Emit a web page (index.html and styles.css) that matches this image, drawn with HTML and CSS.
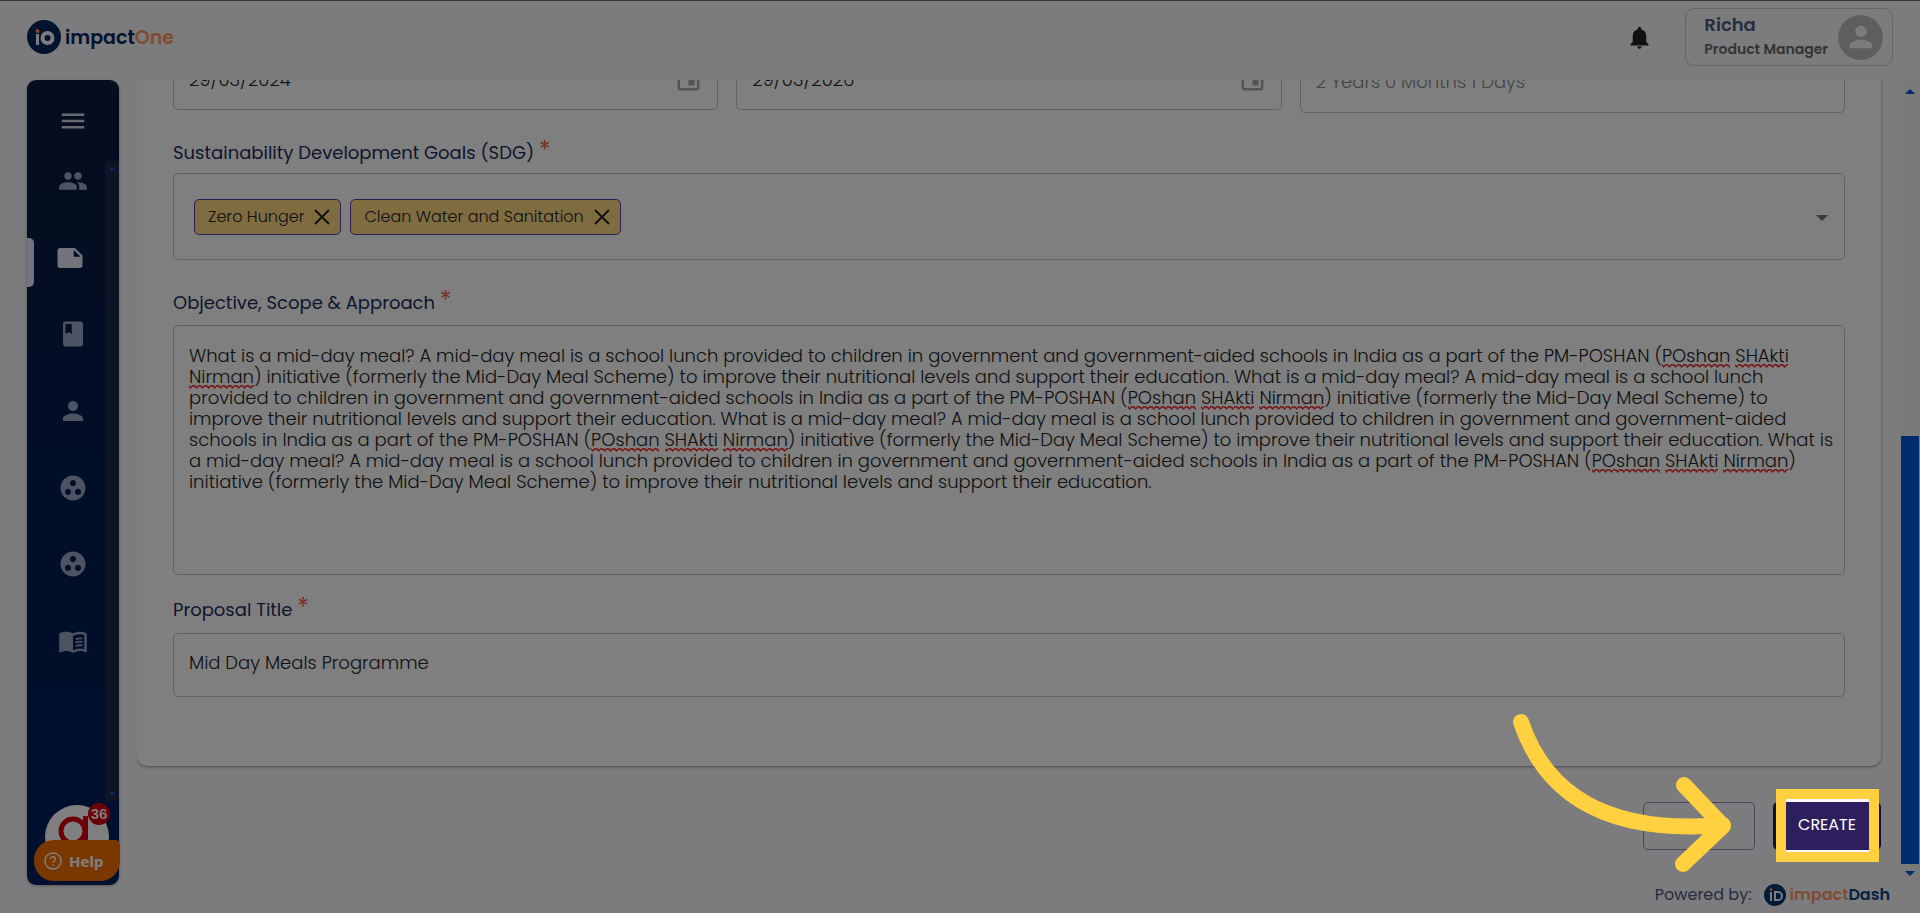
FILE: index.html
```html
<!DOCTYPE html>
<html lang="en">
<head>
  <meta charset="UTF-8">
  <title>impactOne</title>
  <link rel="stylesheet" href="styles.css">
</head>
<body>

  <header class="topbar">
    <a class="brand" href="#">
      <svg class="brand-mark" viewBox="0 0 34 34" width="34" height="34" aria-hidden="true">
        <circle cx="17" cy="17" r="17" fill="#04285a"/>
        <rect x="9" y="14" width="3" height="11" fill="#f8f8fc"/>
        <circle cx="10.500" cy="11" r="2" fill="#ff8a4c"/>
        <circle cx="20.500" cy="18" r="5" fill="none" stroke="#f8f8fc" stroke-width="4"/>
      </svg>
      <span class="brand-name">impact<span class="brand-accent">One</span></span>
    </a>
    <div class="topbar-right">
      <button class="icon-btn" aria-label="Notifications">
        <svg viewBox="0 0 24 24" width="27" height="27"><path d="M12 22c1.1 0 2-.9 2-2h-4c0 1.100.89 2 2 2zm6-6v-5c0-3.070-1.640-5.640-4.500-6.320V4c0-.83-.67-1.500-1.500-1.500s-1.500.67-1.500 1.500v.68C7.630 5.360 6 7.920 6 11v5l-2 2v1h16v-1l-2-2z"/></svg>
      </button>
      <button class="user">
        <span class="user-text">
          <span class="user-name">Richa</span>
          <span class="user-role">Product Manager</span>
        </span>
        <span class="avatar">
          <svg viewBox="0 0 24 24" width="34" height="34"><path d="M12 12c2.210 0 4-1.790 4-4s-1.790-4-4-4-4 1.790-4 4 1.790 4 4 4zm0 2c-2.670 0-8 1.340-8 4v2h16v-2c0-2.660-5.330-4-8-4z"/></svg>
        </span>
      </button>
    </div>
  </header>

  <div class="shell">
    <nav class="sidebar">
      <button class="menu-btn" aria-label="Menu">
        <svg viewBox="0 0 24 24" width="30" height="30"><path d="M3 18h18v-2H3v2zm0-5h18v-2H3v2zm0-7v2h18V6H3z"/></svg>
      </button>
      <div class="nav-scroll">
        <ul class="nav-list">
          <li><a href="#" aria-label="Team"><svg viewBox="0 0 24 24"><path d="M16 11c1.660 0 2.990-1.340 2.990-3S17.660 5 16 5c-1.660 0-3 1.340-3 3s1.340 3 3 3zm-8 0c1.660 0 2.990-1.340 2.990-3S9.660 5 8 5C6.340 5 5 6.340 5 8s1.340 3 3 3zm0 2c-2.330 0-7 1.170-7 3.500V19h14v-2.500c0-2.330-4.670-3.500-7-3.500zm8 0c-.29 0-.62.02-.97.05 1.160.84 1.970 1.970 1.970 3.450V19h6v-2.500c0-2.330-4.670-3.500-7-3.500z"/></svg></a></li>
          <li class="active"><a href="#" aria-label="Proposals"><svg viewBox="0 0 24 24"><path d="M22 10l-6-6H4c-1.100 0-2 .9-2 2v12.010c0 1.100.9 1.990 2 1.990l16-.01c1.100 0 2-.89 2-1.990v-8zm-7-4.500l5.500 5.500H15V5.500z"/></svg></a></li>
          <li><a href="#" aria-label="Projects"><svg viewBox="0 0 24 24"><path d="M18 2H6c-1.100 0-2 .9-2 2v16c0 1.100.9 2 2 2h12c1.100 0 2-.9 2-2V4c0-1.100-.9-2-2-2zM6 4h5v8l-2.500-1.500L6 12V4z"/></svg></a></li>
          <li><a href="#" aria-label="Profile"><svg viewBox="0 0 24 24"><path d="M12 12c2.210 0 4-1.790 4-4s-1.790-4-4-4-4 1.790-4 4 1.790 4 4 4zm0 2c-2.670 0-8 1.340-8 4v2h16v-2c0-2.660-5.330-4-8-4z"/></svg></a></li>
          <li><a href="#" aria-label="Groups"><svg viewBox="0 0 24 24"><path d="M12 2C6.480 2 2 6.480 2 12s4.480 10 10 10 10-4.480 10-10S17.520 2 12 2zM8 17.500c-1.380 0-2.500-1.120-2.500-2.500s1.120-2.500 2.500-2.500 2.500 1.120 2.500 2.500-1.120 2.500-2.500 2.500zM9.500 8c0-1.380 1.120-2.500 2.500-2.500s2.500 1.120 2.500 2.500-1.120 2.500-2.500 2.500S9.500 9.380 9.500 8zm6.500 9.500c-1.380 0-2.500-1.120-2.500-2.500s1.120-2.500 2.500-2.500 2.500 1.120 2.500 2.500-1.120 2.500-2.500 2.500z"/></svg></a></li>
          <li><a href="#" aria-label="Partners"><svg viewBox="0 0 24 24"><path d="M12 2C6.480 2 2 6.480 2 12s4.480 10 10 10 10-4.480 10-10S17.520 2 12 2zM8 17.500c-1.380 0-2.500-1.120-2.500-2.500s1.120-2.500 2.500-2.500 2.500 1.120 2.500 2.500-1.120 2.500-2.500 2.500zM9.500 8c0-1.380 1.120-2.500 2.500-2.500s2.500 1.120 2.500 2.500-1.120 2.500-2.500 2.500S9.500 9.380 9.500 8zm6.500 9.500c-1.380 0-2.500-1.120-2.500-2.500s1.120-2.500 2.500-2.500 2.500 1.120 2.500 2.500-1.120 2.500-2.500 2.500z"/></svg></a></li>
          <li><a href="#" aria-label="Library"><svg viewBox="0 0 24 24"><path d="M21 5c-1.110-.35-2.330-.5-3.500-.5-1.950 0-4.050.4-5.500 1.500-1.450-1.100-3.550-1.500-5.500-1.500S2.450 4.900 1 6v14.650c0 .25.25.5.5.5.1 0 .15-.05.25-.05C3.100 20.450 5.050 20 6.500 20c1.950 0 4.050.4 5.500 1.500 1.350-.85 3.800-1.500 5.500-1.500 1.650 0 3.350.3 4.750 1.050.1.05.15.05.25.05.25 0 .5-.25.5-.5V6c-.6-.45-1.250-.75-2-1zm0 13.500c-1.100-.35-2.300-.5-3.500-.5-1.700 0-4.150.65-5.500 1.500V8c1.350-.85 3.800-1.500 5.500-1.500 1.200 0 2.400.15 3.500.5v11.500z"/><path d="M14 10.600c1.700-.7 3.800-.9 5.500-.6M14 13.300c1.700-.7 3.800-.9 5.500-.6M14 16c1.700-.7 3.800-.9 5.500-.6" fill="none" stroke="currentColor" stroke-width="1.400"/></svg></a></li>
        </ul>
        <div class="nav-track">
          <svg viewBox="0 0 6 3" width="6" height="3"><path d="M0 3l3-3 3 3z"/></svg>
          <svg viewBox="0 0 6 3" width="6" height="3"><path d="M0 0l3 3 3-3z"/></svg>
        </div>
      </div>
    </nav>

    <div class="page">
      <main class="content">
        <form class="card">
          <div class="dates">
            <div class="box date-box">
              <input type="text" value="29/03/2024" aria-label="Start date">
              <svg viewBox="0 0 24 24" width="29" height="29"><path d="M17 12h-5v5h5v-5zM16 1v2H8V1H6v2H5c-1.110 0-1.990.9-1.990 2L3 19c0 1.100.89 2 2 2h14c1.100 0 2-.9 2-2V5c0-1.100-.9-2-2-2h-1V1h-2zm3 18H5V8h14v11z"/></svg>
            </div>
            <div class="box date-box">
              <input type="text" value="29/03/2026" aria-label="End date">
              <svg viewBox="0 0 24 24" width="29" height="29"><path d="M17 12h-5v5h5v-5zM16 1v2H8V1H6v2H5c-1.110 0-1.990.9-1.990 2L3 19c0 1.100.89 2 2 2h14c1.100 0 2-.9 2-2V5c0-1.100-.9-2-2-2h-1V1h-2zm3 18H5V8h14v11z"/></svg>
            </div>
            <div class="box date-box duration">
              <input type="text" value="2 Years 0 Months 1 Days" aria-label="Duration" disabled>
            </div>
          </div>

          <label class="label" for="sdg">Sustainability Development Goals (SDG) <span class="req">*</span></label>
          <div class="box goals">
            <span class="chip">Zero Hunger
              <button type="button" aria-label="Remove Zero Hunger"><svg viewBox="0 0 16 16" width="16" height="16"><path d="M1 1l14 14M15 1L1 15"/></svg></button>
            </span>
            <span class="chip">Clean Water and Sanitation
              <button type="button" aria-label="Remove Clean Water and Sanitation"><svg viewBox="0 0 16 16" width="16" height="16"><path d="M1 1l14 14M15 1L1 15"/></svg></button>
            </span>
            <select id="sdg"><option></option></select>
            <svg class="caret" viewBox="0 0 12 6" width="12" height="6"><path d="M0 0l6 6 6-6z"/></svg>
          </div>

          <label class="label" for="objective">Objective, Scope &amp; Approach <span class="req">*</span></label>
          <div class="box notes">
            <textarea id="objective" spellcheck="false">What is a mid-day meal? A mid-day meal is a school lunch provided to children in government and government-aided schools in India as a part of the PM-POSHAN (POshan SHAkti Nirman) initiative (formerly the Mid-Day Meal Scheme) to improve their nutritional levels and support their education. What is a mid-day meal? A mid-day meal is a school lunch provided to children in government and government-aided schools in India as a part of the PM-POSHAN (POshan SHAkti Nirman) initiative (formerly the Mid-Day Meal Scheme) to improve their nutritional levels and support their education. What is a mid-day meal? A mid-day meal is a school lunch provided to children in government and government-aided schools in India as a part of the PM-POSHAN (POshan SHAkti Nirman) initiative (formerly the Mid-Day Meal Scheme) to improve their nutritional levels and support their education. What is a mid-day meal? A mid-day meal is a school lunch provided to children in government and government-aided schools in India as a part of the PM-POSHAN (POshan SHAkti Nirman) initiative (formerly the Mid-Day Meal Scheme) to improve their nutritional levels and support their education.</textarea>
            <div class="spelling" aria-hidden="true"></div>
          </div>

          <label class="label" for="title">Proposal Title <span class="req">*</span></label>
          <div class="box title-box">
            <input type="text" id="title" value="Mid Day Meals Programme">
          </div>
        </form>

        <div class="actions">
          <button class="btn btn-outline" aria-label="Cancel"></button>
          <button class="btn btn-primary">CREATE</button>
        </div>
      </main>

      <div class="scrollbar">
        <svg viewBox="0 0 10 5" width="10" height="5"><path d="M0 5l5-5 5 5z"/></svg>
        <div class="thumb"></div>
        <svg viewBox="0 0 10 5" width="10" height="5"><path d="M0 0l5 5 5-5z"/></svg>
      </div>

      <footer class="footer">
        <span>Powered by:</span>
        <a class="dash" href="#">
          <svg viewBox="0 0 22 22" width="22" height="22" aria-hidden="true">
            <circle cx="11" cy="11" r="11" fill="#04386f"/>
            <rect x="6" y="8" width="2" height="9" fill="#f8f8fc"/>
            <circle cx="7" cy="5.500" r="1.500" fill="#ff8a4c"/>
            <path d="M11 8h3a3.500 3.500 0 0 1 0 8h-3z" fill="none" stroke="#f8f8fc" stroke-width="2"/>
          </svg>
          <span class="dash-name"><span class="brand-accent">impact</span>Dash</span>
        </a>
      </footer>
    </div>
  </div>

  <div class="chat">
    <svg viewBox="0 0 64 64" width="64" height="64" aria-hidden="true">
      <circle cx="32" cy="32" r="32" fill="#fff"/>
      <circle cx="28" cy="26" r="12" fill="none" stroke="#d8000c" stroke-width="5"/>
      <rect x="38" y="11" width="5" height="29" fill="#d8000c"/>
      <circle cx="49" cy="38" r="3" fill="#d8000c"/>
    </svg>
    <span class="count">36</span>
  </div>
  <button class="help">
    <svg viewBox="0 0 18 18" width="18" height="18"><circle cx="9" cy="9" r="8"/><path d="M6.500 7.200c0-3.400 5-3.200 5-.1 0 2-2.500 1.900-2.500 3.900M9 12.500v1.500"/></svg>
    Help
  </button>

  <!-- tour step -->
  <div class="spotlight"></div>
  <svg class="arrow" viewBox="0 0 230 166" width="230" height="166" aria-hidden="true">
    <path d="M16 12C40 83 100 125 218 115M179 75L218 116L178 154"/>
  </svg>

  <script>
    const objective = document.getElementById('objective');
    const spelling = document.querySelector('.spelling');
    const unknownWords = /\b(POshan|SHAkti|Nirman)\b/g;

    // lay the text out once to find the unknown words, then keep only their underlines
    function markSpelling() {
      spelling.textContent = objective.value;
      const text = spelling.firstChild;
      const origin = spelling.getBoundingClientRect();
      const marks = [];
      for (const match of objective.value.matchAll(unknownWords)) {
        const range = document.createRange();
        range.setStart(text, match.index);
        range.setEnd(text, match.index + match[0].length);
        const rect = range.getBoundingClientRect();
        const mark = document.createElement('i');
        mark.className = 'typo';
        mark.style.left = Math.round(rect.left - origin.left) + 'px';
        mark.style.top = Math.round((rect.top + rect.bottom) / 2 - origin.top) + 'px';
        mark.style.width = Math.round(rect.width) + 'px';
        marks.push(mark);
      }
      spelling.replaceChildren(...marks);
    }

    objective.addEventListener('input', markSpelling);
    window.addEventListener('resize', markSpelling);
    markSpelling();
  </script>

</body>
</html>
```
FILE: styles.css
```css
* {
  box-sizing: border-box;
}
body {
  margin: 0;
  height: 100vh;
  display: flex;
  flex-direction: column;
  overflow: hidden;
  background-color: #f8f8fc;
  font-family: Poppins, Inter, sans-serif;
  font-size: 18px;
  color: #222;
}
button, input, select, textarea {
  font: inherit;
  color: inherit;
  border: none;
  background: none;
  padding: 0;
  outline: none;
}
button {
  cursor: pointer;
}
a {
  color: inherit;
  text-decoration: none;
}
svg {
  display: block;
  fill: currentColor;
}

/* top bar */
.topbar {
  height: 80px;
  flex: none;
  display: flex;
  justify-content: space-between;
  align-items: center;
  padding: 0 27px 7px;
  border-top: 1px solid #66666c;
}
.brand {
  display: flex;
  align-items: center;
  gap: 4px;
}
.brand-name {
  font-size: 19px;
  font-weight: 600;
  color: #04285a;
}
.brand-accent {
  color: #ff9866;
}
.topbar-right {
  display: flex;
  align-items: center;
  gap: 32px;
}
.icon-btn {
  color: #222;
}
.user {
  display: flex;
  align-items: center;
  gap: 10px;
  height: 58px;
  padding: 0 9px 0 18px;
  border: 1px solid #ccccd2;
  border-radius: 9px;
  text-align: left;
}
.user-text {
  display: flex;
  flex-direction: column;
}
.user-name {
  font-size: 18px;
  line-height: 24px;
  font-weight: 600;
  color: #4c5c80;
}
.user-role {
  font-size: 14px;
  line-height: 24px;
  font-weight: 600;
  color: #666;
}
.avatar {
  display: flex;
  justify-content: center;
  align-items: center;
  width: 45px;
  height: 45px;
  border-radius: 50%;
  background-color: #bdbdbd;
  color: #f8f8fc;
}

/* sidebar */
.shell {
  flex: 1;
  min-height: 0;
  display: flex;
}
.sidebar {
  width: 92px;
  flex: none;
  margin: 0 18px 28px 27px;
  display: flex;
  flex-direction: column;
  border-radius: 9px;
  overflow: hidden;
  background: linear-gradient(#0a1c3c, #041c4c 40%, #021c50 55%, #00205c);
  box-shadow: 0 1px 3px rgba(0, 0, 0, 0.3);
}
.menu-btn {
  display: flex;
  justify-content: center;
  align-items: center;
  height: 81px;
  flex: none;
  color: #d0d4e4;
}
.nav-scroll {
  position: relative;
  height: 640px;
}
.nav-list {
  list-style: none;
  display: flex;
  flex-direction: column;
  justify-content: space-between;
  height: 508px;
  margin: -4px 0 0;
  padding: 0;
}
.nav-list li {
  display: flex;
  align-items: center;
  height: 48px;
  color: #99a8c8;
}
.nav-list li.active {
  color: #e8ebf8;
}
.nav-list .active::before {
  content: "";
  width: 7px;
  height: 49px;
  margin-top: 9px;
  border-radius: 0 5px 5px 0;
  background-color: #e8ebf8;
}
.nav-list a {
  flex: 1;
  display: flex;
  justify-content: center;
}
.nav-list .active a {
  padding-right: 13px;
}
.nav-list svg {
  width: 30px;
  height: 30px;
}
.nav-track {
  position: absolute;
  top: 0;
  right: 0;
  bottom: 0;
  width: 14px;
  padding: 6px 0;
  display: flex;
  flex-direction: column;
  justify-content: space-between;
  align-items: center;
  background-color: #1a2a48;
  color: #0057d8;
}

/* page */
.page {
  flex: 1;
  min-width: 0;
  display: grid;
  grid-template-columns: 1fr 20px;
  grid-template-rows: minmax(0, 1fr) 31px;
}
.content {
  display: flex;
  flex-direction: column;
  justify-content: flex-end;
  overflow: hidden;
  padding: 0 19px 32px 0;
}
.card {
  flex: none;
  padding: 40px 36px 69px;
  background-color: #fff;
  border-radius: 10px;
  box-shadow: 0 1px 3px rgba(0, 0, 0, 0.4);
}
.box {
  border: 1px solid #c4c4c4;
  border-radius: 5px;
  font-weight: 300;
}
.box input {
  flex: 1;
  min-width: 0;
}
.dates {
  display: grid;
  grid-template-columns: repeat(3, 1fr);
  gap: 18px;
  align-items: start;
  margin-bottom: 20px;
}
.date-box {
  height: 64px;
  display: flex;
  align-items: center;
  padding: 3px 14px 0 15px;
  color: #222;
}
.date-box svg {
  color: #a8a8a8;
}
.duration {
  height: 67px;
  color: #888;
}
.label {
  display: block;
  height: 40px;
  line-height: 40px;
  color: #1c2c5c;
}
.req {
  font-size: 24px;
  line-height: 24px;
  color: #f8604c;
}
.goals {
  display: flex;
  align-items: center;
  gap: 9px;
  height: 87px;
  margin-bottom: 23px;
  padding: 0 16px 0 20px;
}
.chip {
  display: flex;
  align-items: center;
  gap: 10px;
  height: 36px;
  padding: 0 10px 0 13px;
  border: 1px solid #5c3eaa;
  border-radius: 5px;
  background-color: #ffdb82;
  font-size: 16px;
  color: #222;
}
.chip svg {
  stroke: #222;
  stroke-width: 2;
}
.goals select {
  flex: 1;
  height: 100%;
  appearance: none;
}
.caret {
  margin-top: 3px;
  color: #777;
}
.notes {
  position: relative;
  display: grid;
  height: 250px;
  margin: 2px 0 15px;
}
.notes textarea, .spelling {
  padding: 19px 10px 19px 15px;
  line-height: 21px;
  white-space: pre-wrap;
  resize: none;
  overflow: hidden;
}
.spelling {
  position: absolute;
  inset: 0;
  pointer-events: none;
}
.typo {
  position: absolute;
  height: 4px;
  margin-top: 8px;
  background: url("data:image/svg+xml,%3Csvg xmlns='http://www.w3.org/2000/svg' width='6' height='4'%3E%3Cpath d='M-1 0L1 2 1.500 3 4.500 0 7 3' fill='none' stroke='%23e82828' stroke-width='1.300'/%3E%3C/svg%3E") repeat-x;
}
.title-box {
  display: flex;
  height: 64px;
  margin-top: 3px;
  padding: 0 15px 5px;
}
.actions {
  flex: none;
  display: flex;
  justify-content: flex-end;
  gap: 18px;
  margin-top: 36px;
}
.btn {
  height: 48px;
  padding-bottom: 3px;
  border-radius: 5px;
  font-size: 16px;
  font-weight: 400;
}
.btn-outline {
  width: 112px;
  border: 1px solid #8c90a8;
}
.btn-primary {
  width: 108px;
  background-color: #2d1f5e;
  color: #fff;
}
.scrollbar {
  display: flex;
  flex-direction: column;
  justify-content: space-between;
  align-items: center;
  padding: 9px 0 6px;
  background-color: #f4f4f4;
  color: #0057d8;
}
.thumb {
  width: 18px;
  height: 428px;
  margin: auto 0 7px;
  background-color: #0057d8;
}
.footer {
  grid-column: 1 / -1;
  display: flex;
  justify-content: flex-end;
  gap: 12px;
  padding: 2px 30px 0 0;
  font-size: 16px;
  line-height: 22px;
  color: #50587c;
}
.dash {
  display: flex;
  gap: 4px;
}
.dash-name {
  font-weight: 600;
  color: #0a4486;
}

/* chat launcher */
.chat {
  position: fixed;
  left: 45px;
  bottom: 44px;
}
.count {
  position: absolute;
  top: -2px;
  right: -1px;
  width: 22px;
  height: 22px;
  border-radius: 50%;
  background-color: #d8000c;
  color: #fff;
  font-family: "Liberation Sans", Arial, sans-serif;
  font-size: 15px;
  line-height: 22px;
  font-weight: 700;
  text-align: center;
}
.help {
  position: fixed;
  left: 34px;
  bottom: 32px;
  width: 86px;
  height: 41px;
  display: flex;
  align-items: center;
  gap: 7px;
  padding-left: 10px;
  border-radius: 20px 5px 20px 20px;
  background-color: #f47000;
  color: #fff;
  font-family: "Noto Sans", sans-serif;
  font-size: 15px;
  font-weight: 700;
}
.help svg {
  fill: none;
  stroke: #fff;
  stroke-width: 1.4;
}

/* tour step: the spread shadow dims everything but the button */
.spotlight {
  position: fixed;
  right: 41px;
  bottom: 51px;
  width: 103px;
  height: 73px;
  border: 10px solid #ffd140;
  box-shadow: 0 0 0 2000px rgba(0, 0, 0, 0.5);
  pointer-events: none;
}
.arrow {
  position: fixed;
  right: 185px;
  bottom: 37px;
  fill: none;
  stroke: #ffd140;
  stroke-width: 16;
  stroke-linecap: round;
  stroke-linejoin: round;
  overflow: visible;
  pointer-events: none;
}
```
